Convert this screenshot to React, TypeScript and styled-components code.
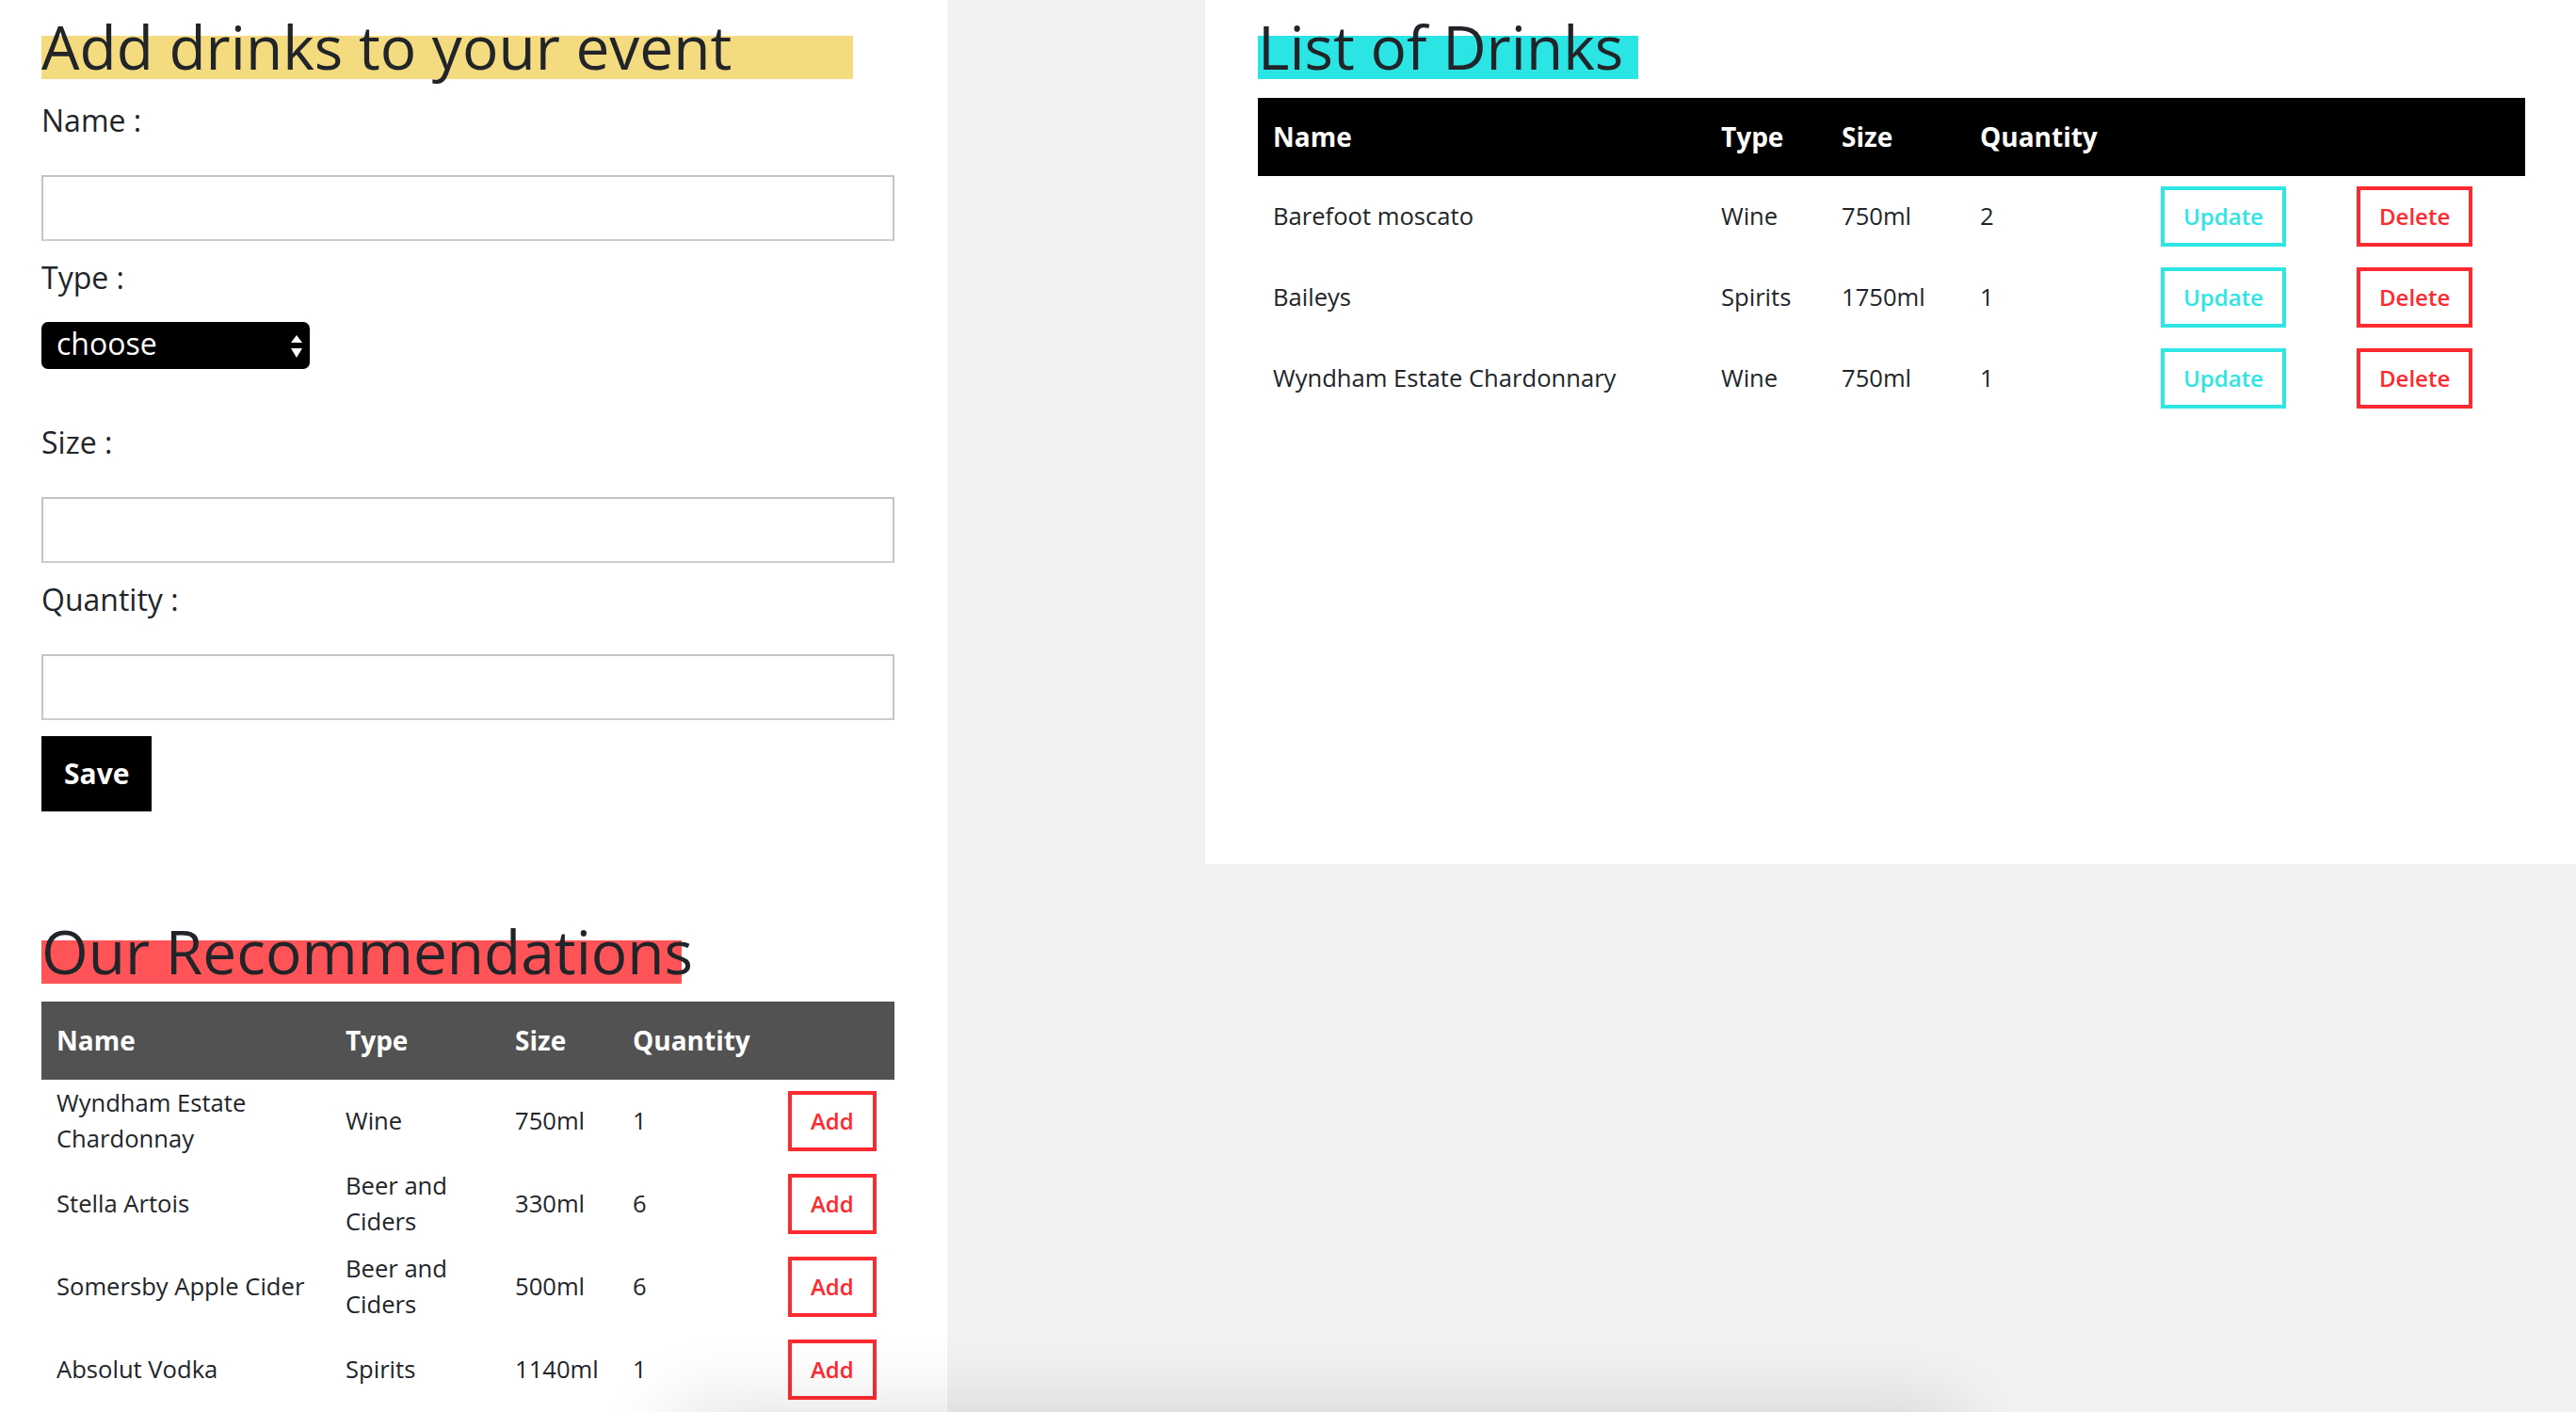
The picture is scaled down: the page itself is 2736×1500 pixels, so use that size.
import React from "react";
import styled, { createGlobalStyle } from "styled-components";

const GlobalStyle = createGlobalStyle`
  html, body {
    margin: 0;
    padding: 0;
    background: #f2f2f2;
  }
  body {
    font-family: "Open Sans", "Liberation Sans", sans-serif;
    color: #212529;
  }
  * { box-sizing: border-box; }
`;

const COLORS = {
  yellow: "#f4db80",
  cyan: "#2ae5e3",
  coral: "#ff5457",
  red: "#ff2a2f",
  teal: "#2ee6e4",
  grey: "#525252",
  black: "#000000",
};

const Page = styled.div`
  display: flex;
  align-items: flex-start;
  gap: 274px;
  min-height: 100vh;
`;

const FormPanel = styled.section`
  flex: 0 0 1006px;
  align-self: stretch;
  background: #fff;
  padding: 0 56px 0 44px;
`;

const ListPanel = styled.section`
  flex: 1;
  height: 918px;
  background: #fff;
  padding: 0 54px 0 56px;
`;

const Heading = styled.h1<{ $hl: string; $w: number; $top?: number }>`
  margin: ${(p) => p.$top ?? 6}px 0 0;
  width: ${(p) => p.$w}px;
  font-size: 64px;
  font-weight: 400;
  line-height: 87px;
  white-space: nowrap;
  color: #212529;
  background: linear-gradient(
    to bottom,
    transparent 32px,
    ${(p) => p.$hl} 32px,
    ${(p) => p.$hl} 78px,
    transparent 78px
  );
`;

const Form = styled.form`
  display: flex;
  flex-direction: column;
  align-items: flex-start;
  margin-top: 13px;
`;

const Label = styled.label`
  display: block;
  font-size: 32px;
  line-height: 44px;
`;

const TextInput = styled.input`
  display: block;
  width: 100%;
  height: 70px;
  margin: 36px 0 17px;
  border: 2px solid #c4c4c4;
  border-bottom-color: #cdcdcd;
  background: #fff;
  font: inherit;
  font-size: 28px;
  padding: 0 14px;
  outline: none;
`;

const SelectWrap = styled.div`
  position: relative;
  width: 285px;
  height: 50px;
  margin: 25px 0 56px;
`;

const Select = styled.select`
  appearance: none;
  -webkit-appearance: none;
  width: 100%;
  height: 100%;
  border: none;
  border-radius: 7px;
  background: #000;
  color: #fff;
  font-family: "Open Sans", sans-serif;
  font-size: 32px;
  padding: 0 40px 6px 16px;
  outline: none;
`;

const SelectArrows = styled.svg`
  position: absolute;
  right: 8px;
  top: 14px;
  width: 12px;
  height: 24px;
  pointer-events: none;
`;

const SaveButton = styled.button`
  height: 80px;
  padding: 0 24px;
  border: none;
  background: #000;
  color: #fff;
  font-family: inherit;
  font-size: 30px;
  font-weight: 700;
  line-height: 80px;
  cursor: pointer;
`;

const Table = styled.table<{ $top: number }>`
  width: 100%;
  margin-top: ${(p) => p.$top}px;
  border-collapse: collapse;
  table-layout: fixed;
  font-size: 25.6px;
  line-height: 38px;
  color: #212529;
`;

const HeadCell = styled.th<{ $bg: string }>`
  background: ${(p) => p.$bg};
  color: #fff;
  text-align: left;
  font-size: 28px;
  font-weight: 700;
  line-height: 39px;
  padding: 22px 8px 22px 16px;
`;

const Cell = styled.td<{ $py: number }>`
  text-align: left;
  vertical-align: middle;
  padding: ${(p) => p.$py}px 8px ${(p) => p.$py}px 16px;
`;

const ActionButton = styled.button<{ $color: string; $my?: number }>`
  display: block;
  margin: ${(p) => p.$my ?? 0}px 0;
  border: 4px solid ${(p) => p.$color};
  background: #fff;
  color: ${(p) => p.$color};
  font-family: inherit;
  font-size: 24px;
  font-weight: 600;
  line-height: 36px;
  padding: 10px 20px;
  cursor: pointer;
`;

const BottomShade = styled.div`
  position: fixed;
  left: 720px;
  top: 100vh;
  width: 1360px;
  height: 60px;
  box-shadow: 0 0 80px 6px rgba(0, 0, 0, 0.13);
  pointer-events: none;
`;

type Drink = { name: string; type: string; size: string; qty: number };

const myDrinks: Drink[] = [
  { name: "Barefoot moscato", type: "Wine", size: "750ml", qty: 2 },
  { name: "Baileys", type: "Spirits", size: "1750ml", qty: 1 },
  { name: "Wyndham Estate Chardonnary", type: "Wine", size: "750ml", qty: 1 },
];

const recommendations: Drink[] = [
  { name: "Wyndham Estate Chardonnay", type: "Wine", size: "750ml", qty: 1 },
  { name: "Stella Artois", type: "Beer and Ciders", size: "330ml", qty: 6 },
  { name: "Somersby Apple Cider", type: "Beer and Ciders", size: "500ml", qty: 6 },
  { name: "Absolut Vodka", type: "Spirits", size: "1140ml", qty: 1 },
];

const recCols = [307, 180, 125, 165, 129];
const listCols = [476, 128, 147, 192, 208, 195];

export default function App() {
  return (
    <>
      <GlobalStyle />
      <Page>
        <FormPanel>
          <Heading $hl={COLORS.yellow} $w={862}>
            Add drinks to your event
          </Heading>
          <Form onSubmit={(e) => e.preventDefault()}>
            <Label htmlFor="name">Name :</Label>
            <TextInput id="name" type="text" />
            <Label htmlFor="type">Type :</Label>
            <SelectWrap>
              <Select id="type" defaultValue="choose">
                <option value="choose">choose</option>
                <option value="wine">Wine</option>
                <option value="spirits">Spirits</option>
                <option value="beer">Beer and Ciders</option>
              </Select>
              <SelectArrows viewBox="0 0 12 24">
                <polygon points="0,8 12,8 6,0" fill="#fff" />
                <polygon points="0,14 12,14 6,24" fill="#fff" />
              </SelectArrows>
            </SelectWrap>
            <Label htmlFor="size">Size :</Label>
            <TextInput id="size" type="text" />
            <Label htmlFor="qty">Quantity :</Label>
            <TextInput id="qty" type="text" />
            <SaveButton type="submit">Save</SaveButton>
          </Form>

          <Heading $hl={COLORS.coral} $w={680} $top={105}>
            Our Recommendations
          </Heading>
          <Table $top={10}>
            <colgroup>
              {recCols.map((w, i) => (
                <col key={i} style={{ width: w }} />
              ))}
            </colgroup>
            <thead>
              <tr>
                <HeadCell $bg={COLORS.grey}>Name</HeadCell>
                <HeadCell $bg={COLORS.grey}>Type</HeadCell>
                <HeadCell $bg={COLORS.grey}>Size</HeadCell>
                <HeadCell $bg={COLORS.grey}>Quantity</HeadCell>
                <HeadCell $bg={COLORS.grey} />
              </tr>
            </thead>
            <tbody>
              {recommendations.map((d) => (
                <tr key={d.name}>
                  <Cell $py={6}>{d.name}</Cell>
                  <Cell $py={6}>{d.type}</Cell>
                  <Cell $py={6}>{d.size}</Cell>
                  <Cell $py={6}>{d.qty}</Cell>
                  <Cell $py={6}>
                    <ActionButton $color={COLORS.red} $my={6}>
                      Add
                    </ActionButton>
                  </Cell>
                </tr>
              ))}
            </tbody>
          </Table>
        </FormPanel>

        <ListPanel>
          <Heading $hl={COLORS.cyan} $w={404}>
            List of Drinks
          </Heading>
          <Table $top={11}>
            <colgroup>
              {listCols.map((w, i) => (
                <col key={i} style={{ width: w }} />
              ))}
            </colgroup>
            <thead>
              <tr>
                <HeadCell $bg={COLORS.black}>Name</HeadCell>
                <HeadCell $bg={COLORS.black}>Type</HeadCell>
                <HeadCell $bg={COLORS.black}>Size</HeadCell>
                <HeadCell $bg={COLORS.black}>Quantity</HeadCell>
                <HeadCell $bg={COLORS.black} />
                <HeadCell $bg={COLORS.black} />
              </tr>
            </thead>
            <tbody>
              {myDrinks.map((d) => (
                <tr key={d.name}>
                  <Cell $py={11}>{d.name}</Cell>
                  <Cell $py={11}>{d.type}</Cell>
                  <Cell $py={11}>{d.size}</Cell>
                  <Cell $py={11}>{d.qty}</Cell>
                  <Cell $py={11}>
                    <ActionButton $color={COLORS.teal}>Update</ActionButton>
                  </Cell>
                  <Cell $py={11}>
                    <ActionButton $color={COLORS.red}>Delete</ActionButton>
                  </Cell>
                </tr>
              ))}
            </tbody>
          </Table>
        </ListPanel>
      </Page>
      <BottomShade />
    </>
  );
}
